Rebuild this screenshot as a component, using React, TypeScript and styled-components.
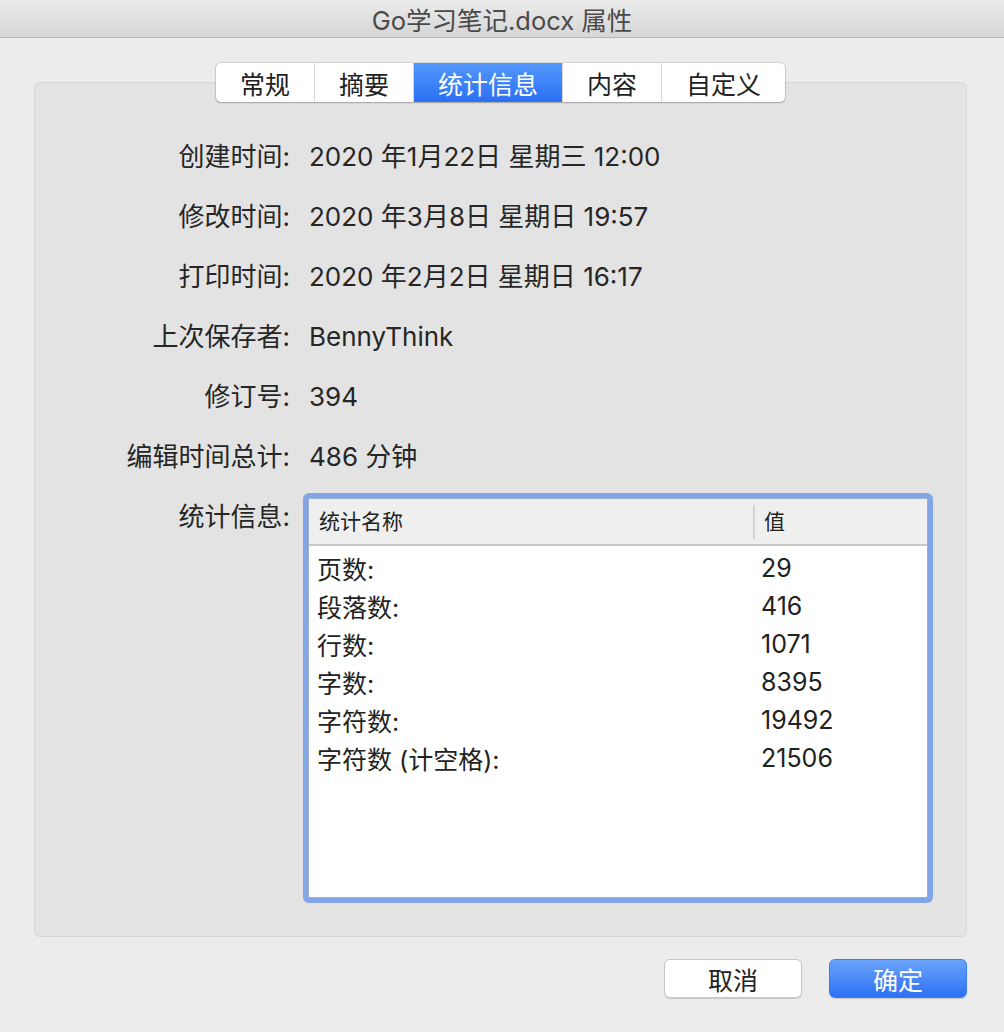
import styled, { createGlobalStyle } from "styled-components";

const GlobalStyle = createGlobalStyle`
  html, body {
    margin: 0;
    padding: 0;
    background: #ececec;
  }
  body {
    font-family: Inter, "Noto Sans CJK SC", sans-serif;
    color: #262626;
  }
`;

const tabs = ["常规", "摘要", "统计信息", "内容", "自定义"];

const infoRows: [string, string][] = [
  ["创建时间:", "2020 年1月22日 星期三 12:00"],
  ["修改时间:", "2020 年3月8日 星期日 19:57"],
  ["打印时间:", "2020 年2月2日 星期日 16:17"],
  ["上次保存者:", "BennyThink"],
  ["修订号:", "394"],
  ["编辑时间总计:", "486 分钟"],
];

const stats: [string, string][] = [
  ["页数:", "29"],
  ["段落数:", "416"],
  ["行数:", "1071"],
  ["字数:", "8395"],
  ["字符数:", "19492"],
  ["字符数 (计空格):", "21506"],
];

export default function App() {
  return (
    <Window>
      <GlobalStyle />
      <TitleBar>Go学习笔记.docx 属性</TitleBar>
      <Body>
        <TabBar>
          {tabs.map((t) => (
            <Tab key={t} $active={t === "统计信息"}>
              {t}
            </Tab>
          ))}
        </TabBar>
        <GroupBox>
          <InfoGrid>
            {infoRows.map(([label, value]) => (
              <Row key={label}>
                <Label>{label}</Label>
                <Value>{value}</Value>
              </Row>
            ))}
            <Row>
              <Label>统计信息:</Label>
              <StatsTable>
                <HeaderRow>
                  <HeaderCell>统计名称</HeaderCell>
                  <HeaderCell $divider>值</HeaderCell>
                </HeaderRow>
                <StatsBody>
                  {stats.map(([name, value]) => (
                    <StatRow key={name}>
                      <StatName>{name}</StatName>
                      <StatValue>{value}</StatValue>
                    </StatRow>
                  ))}
                </StatsBody>
              </StatsTable>
            </Row>
          </InfoGrid>
        </GroupBox>
        <Footer>
          <Button>取消</Button>
          <Button $primary>确定</Button>
        </Footer>
      </Body>
    </Window>
  );
}

const Window = styled.div`
  width: 1004px;
  height: 1032px;
  display: flex;
  flex-direction: column;
  background: #ececec;
  overflow: hidden;
`;

const TitleBar = styled.div`
  height: 37px;
  flex-shrink: 0;
  display: flex;
  align-items: center;
  justify-content: center;
  background: linear-gradient(#ebebeb, #d6d6d6);
  border-bottom: 1px solid #b6b6b6;
  color: #4a4a4a;
  font-size: 25.5px;
`;

const Body = styled.div`
  display: flex;
  flex-direction: column;
  padding: 25px 37px 0 34px;
`;

const TabBar = styled.div`
  align-self: center;
  display: flex;
  height: 39px;
  margin-bottom: -20px;
  position: relative;
  z-index: 1;
  background: #fff;
  border-radius: 5px;
  box-shadow: 0 0 0 1px rgba(0, 0, 0, 0.1), 0 1px 2px rgba(0, 0, 0, 0.2);
  overflow: hidden;
`;

const Tab = styled.div<{ $active?: boolean }>`
  display: flex;
  align-items: center;
  padding: 0 24px;
  font-size: 25px;
  color: ${(p) => (p.$active ? "#fff" : "#222")};
  background: ${(p) =>
    p.$active ? "linear-gradient(#5397fb, #2b6ff3)" : "transparent"};
  & + & {
    border-left: 1px solid #d8d8d8;
  }
`;

const GroupBox = styled.div`
  height: 855px;
  box-sizing: border-box;
  background: #e3e3e3;
  border: 1px solid #d7d7d7;
  border-radius: 6px;
  padding-top: 44px;
`;

const InfoGrid = styled.div`
  display: flex;
  flex-direction: column;
`;

const Row = styled.div`
  display: grid;
  grid-template-columns: 255px 1fr;
  column-gap: 19px;
  align-items: start;
`;

const Label = styled.div`
  text-align: right;
  font-size: 26px;
  line-height: 60px;
  color: #262626;
`;

const Value = styled.div`
  font-size: 26px;
  line-height: 60px;
  color: #262626;
`;

const StatsTable = styled.div`
  width: 620px;
  height: 400px;
  margin-top: 11px;
  margin-left: -1px;
  box-sizing: border-box;
  background: #fff;
  border: 1px solid #9fb0cc;
  border-radius: 2px;
  box-shadow: 0 0 0 5px #83a7e6;
  display: flex;
  flex-direction: column;
`;

const HeaderRow = styled.div`
  height: 47px;
  flex-shrink: 0;
  display: grid;
  grid-template-columns: 444px 1fr;
  background: #efefef;
  border-bottom: 2px solid #c9c9c9;
  box-sizing: border-box;
  align-items: center;
`;

const HeaderCell = styled.div<{ $divider?: boolean }>`
  font-size: 21px;
  color: #222;
  padding-left: ${(p) => (p.$divider ? "9px" : "10px")};
  border-left: ${(p) => (p.$divider ? "2px solid #d4d4d4" : "none")};
  line-height: 34px;
`;

const StatsBody = styled.div`
  padding-top: 3px;
`;

const StatRow = styled.div`
  display: grid;
  grid-template-columns: 444px 1fr;
  height: 38px;
  align-items: center;
  font-size: 25px;
  color: #222;
`;

const StatName = styled.div`
  padding-left: 8px;
`;

const StatValue = styled.div`
  padding-left: 8px;
`;

const Footer = styled.div`
  display: flex;
  justify-content: flex-end;
  gap: 27px;
  margin-top: 22px;
`;

const Button = styled.button<{ $primary?: boolean }>`
  width: 138px;
  height: 39px;
  font-family: inherit;
  font-size: 25px;
  border-radius: 6px;
  cursor: pointer;
  color: ${(p) => (p.$primary ? "#fff" : "#222")};
  background: ${(p) =>
    p.$primary ? "linear-gradient(#6aa3fb, #2c71f4)" : "#fff"};
  border: 1px solid ${(p) => (p.$primary ? "#3b7cf0" : "#c6c6c6")};
  box-shadow: 0 1px 1px rgba(0, 0, 0, 0.15);
`;
